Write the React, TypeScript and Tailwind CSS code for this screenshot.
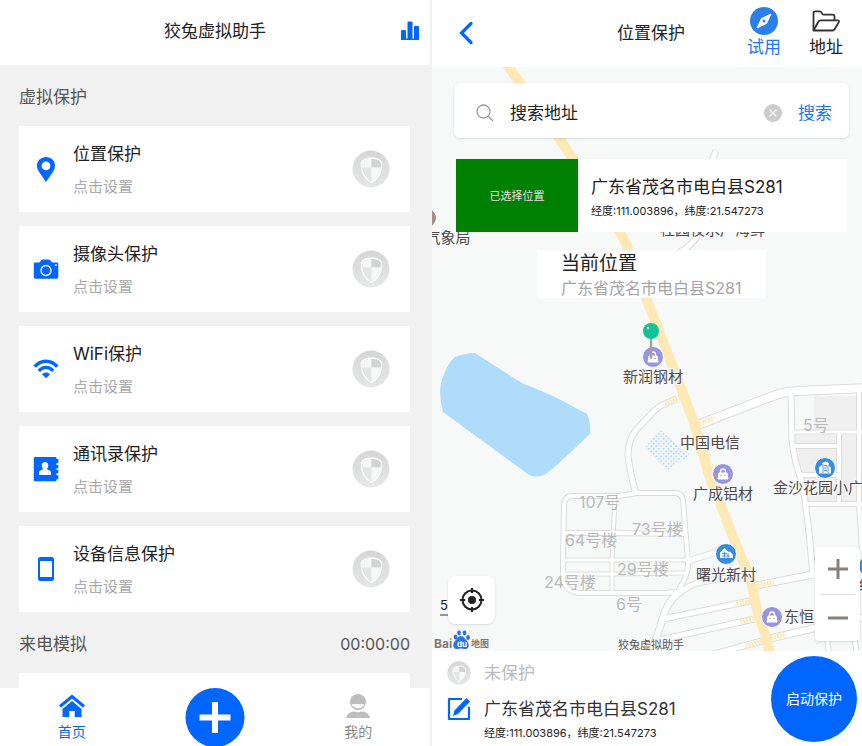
import type { ReactNode } from 'react'

const BLUE = '#0066ff'

function PinIcon() {
  return (
    <svg width="26" height="26" viewBox="0 0 26 26" aria-hidden="true">
      <path
        d="M13 1C8 1 4 4.900 4 9.800c0 2.200.8 4 2 5.900L13 26l7-10.300c1.200-1.900 2-3.700 2-5.900C22 4.900 18 1 13 1Zm0 13.200a4.400 4.400 0 1 1 0-8.800 4.400 4.400 0 0 1 0 8.800Z"
        fill={BLUE}
      />
    </svg>
  )
}

function CameraIcon() {
  return (
    <svg width="26" height="26" viewBox="0 0 26 26" aria-hidden="true">
      <path
        d="M2.500 6.500H6c1.400 0 1.800-3 3.800-3h6c2 0 2.400 3 3.800 3h4c1 0 1.700.7 1.700 1.600v13c0 .9-.7 1.600-1.700 1.600H2.500c-1 0-1.700-.7-1.700-1.600v-13C.8 7.200 1.500 6.500 2.500 6.500Z"
        fill={BLUE}
      />
      <circle cx="13" cy="14.500" r="5" fill="none" stroke="#fff" strokeWidth="1.300" />
      <circle cx="23" cy="9" r="0.900" fill="#fff" />
    </svg>
  )
}

function WifiIcon() {
  return (
    <svg width="26" height="26" viewBox="0 0 26 26" fill="none" stroke={BLUE} aria-hidden="true">
      <path d="M1.700 10.600C8 3.400 18 3.400 24.300 10.600" strokeWidth="3.600" />
      <path d="M5.800 14.800c4.200-4.600 10.200-4.600 14.400 0" strokeWidth="3.200" />
      <path d="M9 18.300c2.300-2.400 5.700-2.400 8 0l-4 4Z" fill={BLUE} stroke="none" />
    </svg>
  )
}

function ContactsIcon() {
  return (
    <svg width="26" height="26" viewBox="0 0 26 26" aria-hidden="true">
      <path
        d="M2 1h20.500a1 1 0 0 1 1 1v1h1.800v4h-1.800v2h1.800v3.200h-1.800V14h1.800v3.200h-1.800v2h1.800v4h-1.800v1a1 1 0 0 1-1 1H2a1.200 1.200 0 0 1-1.200-1.200V2.200A1.200 1.200 0 0 1 2 1Z"
        fill={BLUE}
      />
      <path
        d="M12 6c2.200 0 3.300 1.600 3.300 3.500 0 1.400-.7 2.700-1.500 3.400 0 .9 4.200 1 4.200 3.600V19H6v-2.500c0-2.600 4.200-2.700 4.200-3.600-.8-.7-1.500-2-1.500-3.400C8.700 7.600 9.800 6 12 6Z"
        fill="#fff"
      />
    </svg>
  )
}

function PhoneIcon() {
  return (
    <svg width="26" height="26" viewBox="0 0 26 26" aria-hidden="true">
      <rect x="5" y="1" width="16" height="24" rx="2.500" fill={BLUE} />
      <rect x="7" y="5" width="12" height="16" fill="#fff" />
    </svg>
  )
}

function ShieldBadge({ size }: { size: number }) {
  return (
    <svg width={size} height={size} viewBox="0 0 38 38" aria-hidden="true">
      <defs>
        <linearGradient id="badge" x1="0.500" y1="0" x2="0.500" y2="1">
          <stop offset="0" stopColor="#d6d6d6" />
          <stop offset="1" stopColor="#e6e7e7" />
        </linearGradient>
      </defs>
      <circle cx="19" cy="19" r="18.500" fill="url(#badge)" />
      <path
        d="M19.500 8c4 0 7.500 1.300 9.300 3.400.9 1.200 1.100 2.600.9 4.600C29 23 25 29.500 19.500 32.500 14 29.500 10 23 9.300 16c-.2-2 0-3.400.9-4.600C12 9.300 15.500 8 19.500 8Z"
        fill="#e3e4e4"
        stroke="#fff"
        strokeWidth="1.300"
      />
      <path d="M19.500 9v8.500H10.300c-.4-2.500-.3-4.300.7-5.500C12.500 10 15.500 9 19.500 9Z" fill="#f6f6f6" />
      <path d="M19.500 9c4 0 7 1 8.500 3 1 1.200 1.100 3 .7 5.500H19.500Z" fill="#d2d3d3" />
      <path d="M19.500 17.500h9.200C27.900 23.500 24 28.700 19.500 31.500Z" fill="#f7f7f7" />
    </svg>
  )
}

const features: { title: string; icon: ReactNode }[] = [
  { title: '位置保护', icon: <PinIcon /> },
  { title: '摄像头保护', icon: <CameraIcon /> },
  { title: 'WiFi保护', icon: <WifiIcon /> },
  { title: '通讯录保护', icon: <ContactsIcon /> },
  { title: '设备信息保护', icon: <PhoneIcon /> },
]

function SectionHeading({ title, aside }: { title: string; aside?: string }) {
  return (
    <div className="flex h-[61px] shrink-0 items-center justify-between pt-[2px] leading-6 text-[#555]">
      <h2 className="text-[17px]">{title}</h2>
      {aside && <span className="text-[16px]">{aside}</span>}
    </div>
  )
}

function HomeScreen() {
  return (
    <section className="flex min-h-0 min-w-0 flex-col">
      <header className="grid h-[65px] shrink-0 grid-cols-[1fr_auto_1fr] items-center bg-white px-[10px] pb-[3px]">
        <h1 className="col-start-2 text-[17px] leading-6 text-[#222]">狡兔虚拟助手</h1>
        <button type="button" aria-label="统计" className="justify-self-end">
          <svg width="20" height="20" viewBox="0 0 20 20" fill={BLUE} aria-hidden="true">
            <rect x="1" y="9" width="5" height="10" rx="1" />
            <rect x="7.500" y="0.500" width="5" height="18.500" rx="1" />
            <rect x="14" y="5" width="5" height="14" rx="1" />
            <rect x="1" y="17.500" width="18" height="1.500" />
          </svg>
        </button>
      </header>

      <main className="flex min-h-0 flex-1 flex-col overflow-hidden bg-[#f1f1f1] pr-5 pl-[19px]">
        <SectionHeading title="虚拟保护" />
        <ul className="flex shrink-0 flex-col gap-[14px]">
          {features.map((f) => (
            <li key={f.title}>
              <button type="button" className="flex h-[86px] w-full items-center bg-white pr-5 pl-[14px] text-left">
                {f.icon}
                <span className="ml-[14px] flex flex-1 flex-col gap-[9px] pt-[2px]">
                  <span className="text-[17px] leading-6 text-[#222]">{f.title}</span>
                  <span className="text-[15px] leading-6 text-[#a9a9a9]">点击设置</span>
                </span>
                <ShieldBadge size={38} />
              </button>
            </li>
          ))}
        </ul>
        <SectionHeading title="来电模拟" aside="00:00:00" />
        <div className="h-[86px] shrink-0 bg-white" />
      </main>

      <nav className="grid h-[58px] shrink-0 grid-cols-3 bg-white">
        <a href="#home" className="flex flex-col items-center pt-[6px] text-[14px] leading-5 text-[#0066ff]">
          <svg width="26" height="24" viewBox="0 0 26 24" aria-hidden="true">
            <path d="M1 12.500 13 2.500 25 12.500" fill="none" stroke={BLUE} strokeWidth="3" />
            <path d="M13 7 22.500 15V23H15.700V17h-5.400v6H3.500V15Z" fill={BLUE} />
          </svg>
          <span className="mt-1">首页</span>
        </a>
        <button type="button" aria-label="添加" className="justify-self-center self-start">
          <svg width="60" height="58" viewBox="0 0 60 58" aria-hidden="true">
            <circle cx="30" cy="29.500" r="29.500" fill={BLUE} />
            <path d="M14.500 29.500h31M30 14v31" stroke="#fff" strokeWidth="6" />
          </svg>
        </button>
        <a href="#me" className="flex flex-col items-center pt-[6px] text-[14px] leading-5 text-[#888]">
          <svg width="26" height="24" viewBox="0 0 26 24" aria-hidden="true">
            <circle cx="13" cy="8" r="8" fill="#bdbdbd" />
            <path d="M6.500 10h13c-.6 2.600-3.200 4.300-6.500 4.300S7.100 12.600 6.500 10Z" fill="#fff" />
            <path d="M1 24c.8-4 3.500-6 8-6.600 2.500 1 5.500 1 8 0 4.500.6 7.200 2.600 8 6.600Z" fill="#bdbdbd" />
          </svg>
          <span className="mt-1">我的</span>
        </a>
      </nav>
    </section>
  )
}

const roads: { d: string; w: number }[] = [
  { d: 'M716 151C706 170 712 205 700 232Q692 246 678 253', w: 5 },
  { d: 'M676 399Q658 406 653 412L636 430Q628 440 628 455Q630 473 636 494', w: 5 },
  {
    d: 'M572 496L619 496L637 493L676 493Q682 494 683 500L685 527L688 560Q689 568 685 578L678 592L662 593L578 593Q564 590 563 578L563 560L564 505Q565 496 572 496Z',
    w: 4,
  },
  { d: 'M615 497L612 560L612 592', w: 3 },
  { d: 'M564 533L612 533L686 534', w: 4 },
  { d: 'M563 560L688 560', w: 3 },
  { d: 'M563 574L612 574L685 573', w: 3 },
  { d: 'M688 561L717 552', w: 5 },
  { d: 'M678 594Q690 584 702 582L748 574', w: 5 },
  { d: 'M754 586L815 574', w: 6 },
  { d: 'M678 593Q666 604 663 618L652 652', w: 6 },
  { d: 'M663 619L750 601', w: 5 },
  { d: 'M660 640L754 619', w: 5 },
  { d: 'M710 655L762 641', w: 5 },
  { d: 'M768 639L815 628L870 616', w: 6 },
  { d: 'M695 426L770 397Q786 391 797 391L870 388', w: 8 },
  { d: 'M791 393L792 440Q794 460 800 476Q807 500 813 578', w: 5 },
  { d: 'M792 432L870 432', w: 3 },
  { d: 'M793 446L839 446', w: 4 },
  { d: 'M839 433L839 502', w: 4 },
  { d: 'M798 475L839 475', w: 4 },
  { d: 'M804 504L870 504', w: 4 },
  { d: 'M859 391L859 504L862 550', w: 4 },
  { d: 'M827 635L829 655M854 635L857 655', w: 4 },
]

const mainRoad =
  'M504 60L520 83L559 138L590 185L620 232Q626 243 629 252L646 298L678 380L694 423L710 478L737 547L751 580L757 610L766 637L771 660'

const blockLabels = [
  { x: 803, y: 431, text: '5号' },
  { x: 579, y: 508, text: '107号' },
  { x: 632, y: 535, text: '73号楼' },
  { x: 565, y: 546, text: '64号楼' },
  { x: 617, y: 575, text: '29号楼' },
  { x: 544, y: 588, text: '24号楼' },
  { x: 616, y: 610, text: '6号' },
]

const placeLabels = [
  { x: 653, y: 382, text: '新润钢材' },
  { x: 710, y: 448, text: '中国电信' },
  { x: 723, y: 499, text: '广成铝材' },
  { x: 726, y: 580, text: '曙光新村' },
  { x: 448, y: 243, text: '气象局' },
]

function ShopMarker({ x, y }: { x: number; y: number }) {
  return (
    <g transform={`translate(${x} ${y})`}>
      <circle r="10.500" fill="#9895df" stroke="#fff" />
      <path d="M-4-1h8l1 6H-5Z" fill="#fff" stroke="#fff" strokeLinejoin="round" />
      <path d="M-2.500-1v-1.500a2.500 2.500 0 0 1 5 0V-1" fill="none" stroke="#fff" strokeWidth="1.300" />
      <path d="M-2 1v1M2 1v1" stroke="#9895df" strokeWidth="1.200" />
    </g>
  )
}

function TowerMarker({ x, y }: { x: number; y: number }) {
  return (
    <g transform={`translate(${x} ${y})`}>
      <circle r="10.500" fill="#368de0" stroke="#fff" />
      <path d="M-6 5.500V-1l3-2v-2l4-1.500 3 1.500v3l2 1.500v6Z" fill="#fff" />
      <path d="M-2-4v9M3-3v8M-1-2.500h3M-1 0h3M-1 2.500h3" fill="none" stroke="#368de0" strokeWidth="0.900" />
    </g>
  )
}

function HousingMarker({ x, y }: { x: number; y: number }) {
  return (
    <g transform={`translate(${x} ${y})`}>
      <circle r="10.500" fill="#368de0" stroke="#fff" />
      <path d="M-6 4V-1.500L-1.500-6 2-2.500l2.500.5L7 1v3Z" fill="#fff" />
      <path d="M-4-.5h5M-4 2h8M-1.500-2.500v6M2-1v5" fill="none" stroke="#368de0" strokeWidth="0.900" />
    </g>
  )
}

function MapCanvas() {
  return (
    <svg
      className="absolute inset-0 h-full w-full"
      viewBox="432 67 430 584"
      preserveAspectRatio="xMidYMid slice"
      role="img"
      aria-label="地图"
      fontFamily="Inter, 'Noto Sans CJK SC', sans-serif"
    >
      <defs>
        <pattern id="marsh" width="5" height="5" patternUnits="userSpaceOnUse">
          <rect width="5" height="5" fill="#f1f4f6" />
          <circle cx="1.200" cy="1.200" r="0.800" fill="#a2d5fa" />
          <circle cx="3.700" cy="3.700" r="0.800" fill="#a2d5fa" />
        </pattern>
      </defs>
      <rect x="432" y="67" width="430" height="584" fill="#f7f9f9" />
      <path
        d="M440 391Q441 380 445 372Q449 362 455 357Q465 353 475 353L517 380Q524 385 532 387L555 397L587 414Q591 422 590 434L559 463Q548 473 544 475Q536 478 529 475L443 412Q440 402 440 391Z"
        fill="#afdcfb"
      />
      <path d="M659 429L690 455L667 471L645 448Z" fill="url(#marsh)" />
      <g fill="#efefef">
        <path d="M814 396H856V429H814Z" />
        <path d="M794 435H837V443H794Z" />
        <path d="M797 448H837V472H800Z" />
        <path d="M842 435H857V501H842Z" />
        <path d="M801 477H837V501H808Z" />
      </g>
      <g fill="none">
        {roads.map((r) => (
          <path key={r.d} d={r.d} stroke="#dcdcdc" strokeWidth={r.w + 2} />
        ))}
        {roads.map((r) => (
          <path key={r.d} d={r.d} stroke="#fff" strokeWidth={r.w} />
        ))}
        <path
          d="M680 397L665 404M694 426L714 418M755 586L774 582M750 601L735 604M754 619L740 622M768 638L786 634M762 641L746 646"
          stroke="#fde8b6"
          strokeWidth="5"
          strokeDasharray="2 1"
        />
        <path d={mainRoad} stroke="#fde8b6" strokeWidth="10" strokeLinejoin="round" />
      </g>

      <g fontSize="16" fill="#b9b9b9">
        {blockLabels.map((l) => (
          <text key={l.text} x={l.x} y={l.y}>{l.text}</text>
        ))}
      </g>

      <ShopMarker x={653} y={357} />
      <ShopMarker x={723} y={474} />
      <ShopMarker x={772} y={617} />
      <TowerMarker x={825} y={468} />
      <HousingMarker x={726} y={554} />
      <HousingMarker x={869} y={566} />
      <circle cx="427" cy="218" r="9" fill="#a08f85" />

      <g fontSize="15" fill="#504a48" stroke="#f7f9f9" strokeWidth="2" paintOrder="stroke">
        <g textAnchor="middle">
          {placeLabels.map((l) => (
            <text key={l.text} x={l.x} y={l.y}>{l.text}</text>
          ))}
        </g>
        <text x="773" y="493">金沙花园小广</text>
        <text x="784" y="622">东恒</text>
        <text x="660" y="235">桂园夜水产海鲜</text>
        <text x="859" y="590">经</text>
      </g>

      <path d="M651 338V358" stroke="#a5a09c" strokeWidth="2.500" />
      <circle cx="651" cy="331" r="8" fill="#10c397" />
      <circle cx="648" cy="328" r="1.200" fill="#fff" />

      <text x="440" y="610" fontSize="13" fill="#222">50米</text>
      <path d="M440 615H470" stroke="#333" />
      <text x="618" y="649" fontSize="11" fill="#555">狡兔虚拟助手</text>

      <text x="434" y="648" fontSize="12" fontWeight="700" fill="#837970">Bai</text>
      <g fill="#2b73e8">
        <path d="M461 636c3 0 4 3 6 5s3 7-1 8c-2 .3-3-.4-5-.4s-3 .7-5 .4c-4-1-3-6-1-8s3-5 6-5Z" />
        <ellipse cx="455.500" cy="637" rx="1.900" ry="2.600" />
        <ellipse cx="459" cy="632.800" rx="1.900" ry="2.600" />
        <ellipse cx="464.500" cy="632.800" rx="1.900" ry="2.600" />
        <ellipse cx="468" cy="637.500" rx="1.900" ry="2.600" />
      </g>
      <text x="457" y="647" fontSize="8" fontWeight="700" fill="#fff">du</text>
      <text x="471" y="647" fontSize="9" fontWeight="700" fill="#837970">地图</text>
    </svg>
  )
}

function LocationScreen() {
  return (
    <section className="flex min-h-0 min-w-0 flex-col bg-white">
      <header className="grid h-[67px] shrink-0 grid-cols-[1fr_auto_1fr] items-center pr-[19px] pb-[2px] pl-[27px]">
        <button type="button" aria-label="返回" className="justify-self-start">
          <svg width="15" height="24" viewBox="0 0 15 24" fill="none" stroke={BLUE} strokeWidth="3.200" strokeLinecap="round" aria-hidden="true">
            <path d="M12 2.500 2.500 12 12 21.500" />
          </svg>
        </button>
        <h1 className="text-[17px] leading-6 text-[#222]">位置保护</h1>
        <div className="flex gap-7 justify-self-end text-[17px] leading-6">
          <button type="button" className="flex flex-col items-center text-[#1c78f0]">
            <svg width="28" height="28" viewBox="0 0 28 28" aria-hidden="true">
              <circle cx="14" cy="14" r="14" fill="#2a7fea" />
              <path d="M21 7 16.500 16.500 7 21 11.500 11.500Z" fill="#fff" stroke="#fff" strokeLinejoin="round" />
              <circle cx="14" cy="14" r="1.500" fill="#2a7fea" />
            </svg>
            试用
          </button>
          <button type="button" className="flex flex-col items-center text-[#222]">
            <svg width="28" height="28" viewBox="0 0 28 28" fill="none" stroke="#333" strokeWidth="1.800" strokeLinejoin="round" aria-hidden="true">
              <path d="M1.500 23V6c0-1 .6-1.700 1.600-1.700H8c1.500 0 1.800 3.400 3.500 3.400h9.300c1 0 1.700.7 1.700 1.700V13" />
              <path d="M1.500 23.500 6.500 14.500c.4-.8 1-1.200 2-1.200h17.300c1.200 0 1.500.8 1 1.800l-4.200 7.200c-.5.800-1 1.200-2 1.200Z" />
            </svg>
            地址
          </button>
        </div>
      </header>

      <main className="relative flex min-h-0 flex-1 flex-col overflow-hidden">
        <MapCanvas />

        <form
          className="relative mt-4 mr-[13px] ml-[22px] flex h-[55px] shrink-0 items-center rounded-md bg-white pt-1 pr-[17px] pl-[22px] text-[17px] leading-6 shadow-sm"
          onSubmit={(e) => e.preventDefault()}
        >
          <svg width="18" height="18" viewBox="0 0 18 18" fill="none" stroke="#999" strokeWidth="1.300" aria-hidden="true">
            <circle cx="7.500" cy="7.500" r="6.500" />
            <path d="M12.200 12.200 17 17" />
          </svg>
          <input
            type="text"
            aria-label="搜索地址"
            placeholder="搜索地址"
            className="ml-4 h-6 min-w-0 flex-1 text-[#222] outline-none placeholder:text-[#222]"
          />
          <button type="button" aria-label="清除" className="mr-4">
            <svg width="18" height="18" viewBox="0 0 18 18" aria-hidden="true">
              <circle cx="9" cy="9" r="9" fill="#ccc" />
              <path d="M5.500 5.500l7 7M12.500 5.500l-7 7" stroke="#f5f5f5" strokeWidth="1.200" />
            </svg>
          </button>
          <button type="submit" className="text-[#1c78f0]">搜索</button>
        </form>

        <div className="relative mt-[21px] mr-[15px] ml-6 flex h-[73px] shrink-0 bg-white">
          <div className="flex w-[122px] shrink-0 items-center justify-center bg-[#008000] text-[11px] leading-4 text-[#e8dfe8]">
            已选择位置
          </div>
          <div className="flex min-w-0 flex-col justify-center gap-1 pt-[3px] pl-[13px] whitespace-nowrap text-[#222]">
            <p className="text-[17px] leading-6">广东省茂名市电白县S281</p>
            <p className="text-[11px] leading-4">经度:111.003896，纬度:21.547273</p>
          </div>
        </div>

        <div className="relative mt-[18px] ml-[105px] flex h-12 w-[229px] shrink-0 flex-col bg-white pl-6 whitespace-nowrap">
          <p className="text-[19px] leading-7 text-[#222]">当前位置</p>
          <p className="text-[16px] leading-5 text-[#a5a5a5]">广东省茂名市电白县S281</p>
        </div>

        <div className="relative mt-auto flex items-end justify-between pr-[2px] pb-[10px] pl-4">
          <button type="button" aria-label="定位" className="mb-[17px] flex h-12 w-[47px] items-center justify-center rounded-lg bg-white shadow">
            <svg width="24" height="24" viewBox="0 0 24 24" fill="none" stroke="#222" strokeWidth="2" aria-hidden="true">
              <circle cx="12" cy="12" r="9.500" />
              <circle cx="12" cy="12" r="4" fill="#222" stroke="none" />
              <path d="M12 0v5M12 19v5M0 12h5M19 12h5" />
            </svg>
          </button>
          <div className="flex w-[45px] flex-col items-center rounded-sm bg-white shadow">
            <button type="button" aria-label="放大" className="flex h-[47px] w-full items-center justify-center pb-[3px]">
              <svg width="20" height="20" viewBox="0 0 20 20" stroke="#88807c" strokeWidth="3" aria-hidden="true">
                <path d="M0 10h20M10 0v20" />
              </svg>
            </button>
            <span className="h-px w-[34px] bg-[#ddd]" />
            <button type="button" aria-label="缩小" className="flex h-[46px] w-full items-center justify-center">
              <svg width="20" height="20" viewBox="0 0 20 20" stroke="#88807c" strokeWidth="3" aria-hidden="true">
                <path d="M0 10h20" />
              </svg>
            </button>
          </div>
        </div>
      </main>

      <footer className="flex h-[95px] shrink-0 items-center justify-between bg-white pt-px pr-[5px] pl-[15px]">
        <div className="grid grid-cols-[24px_auto] items-center gap-x-[13px] pb-1 whitespace-nowrap text-[#333]">
          <ShieldBadge size={24} />
          <p className="text-[17px] leading-9 text-[#bbb]">未保护</p>
          <button type="button" aria-label="编辑地址">
            <svg width="24" height="24" viewBox="0 0 24 24" fill="none" aria-hidden="true">
              <path d="M15 2H2v20h20V10" stroke={BLUE} strokeWidth="2.200" strokeLinejoin="round" />
              <path d="M19.500 1 23 4.500 11 17l-5 2 1.500-5.500Z" fill={BLUE} />
            </svg>
          </button>
          <p className="text-[17px] leading-9">广东省茂名市电白县S281</p>
          <p className="col-start-2 text-[11px] leading-3 text-[#222]">经度:111.003896，纬度:21.547273</p>
        </div>
        <button type="button" className="h-[86px] w-[86px] shrink-0 rounded-full bg-[#0066ff] text-[14px] leading-5 text-white">
          启动保护
        </button>
      </footer>
    </section>
  )
}

export default function App() {
  return (
    <div className="grid h-screen grid-cols-2 gap-[2px] overflow-hidden bg-[#f1f1f1] font-[Inter,'Noto_Sans_CJK_SC',sans-serif]">
      <HomeScreen />
      <LocationScreen />
    </div>
  )
}
